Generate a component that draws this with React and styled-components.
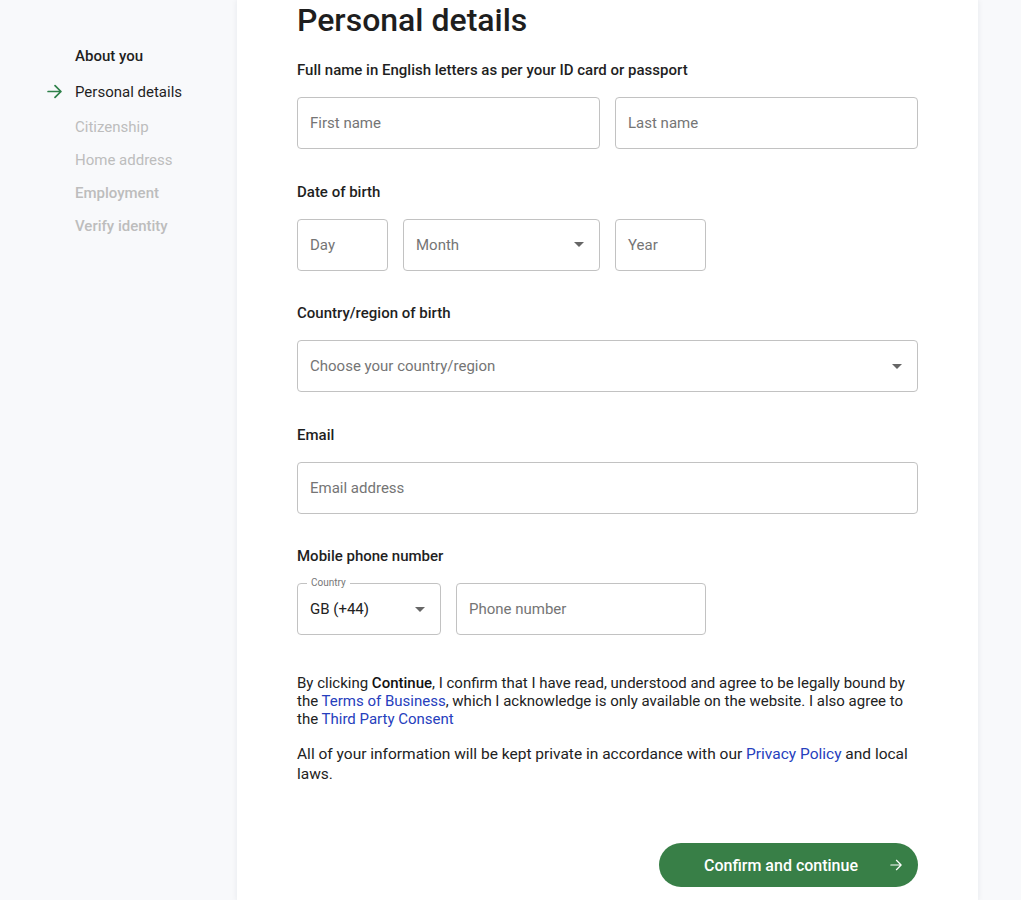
import React from "react";
import styled, { createGlobalStyle } from "styled-components";

const Global = createGlobalStyle`
  html, body { margin: 0; padding: 0; }
  body {
    background: #f8f9fb;
    font-family: Roboto, "Liberation Sans", Arial, sans-serif;
    color: #222;
  }
  * { box-sizing: border-box; }
`;

const Page = styled.div`
  display: flex;
  align-items: stretch;
  min-height: 900px;
`;

const Sidebar = styled.nav`
  width: 237px;
  flex: none;
  padding: 46px 0 0 47px;
  display: flex;
  flex-direction: column;
  gap: 13px;
`;

const NavItem = styled.div`
  display: grid;
  grid-template-columns: 28px auto;
  align-items: center;
  height: ${(p) => (p.$current ? 25 : 20)}px;
  font-size: 15px;
  line-height: 20px;
  font-weight: ${(p) => (p.$bold ? 500 : 400)};
  color: ${(p) => (p.$muted ? "#bdbdbd" : "#1f1f1f")};
`;

const ArrowSlot = styled.span`
  display: flex;
  align-items: center;
  color: #2e8049;
`;

const Card = styled.main`
  width: 741px;
  flex: none;
  background: #fff;
  box-shadow: 0 0 6px rgba(30, 40, 70, 0.08);
  padding: 0 60px 14px;
`;

const Title = styled.h1`
  margin: 0 0 20px;
  font-size: 32px;
  line-height: 40px;
  font-weight: 500;
  color: #1e1e1e;
`;

const Section = styled.section`
  margin-bottom: 32.5px;
`;

const Label = styled.div`
  font-size: 15px;
  line-height: 20px;
  font-weight: 500;
  color: #1f1f1f;
  margin-bottom: 17px;
`;

const Row = styled.div`
  display: flex;
  gap: 15px;
`;

const Field = styled.div`
  position: relative;
  width: ${(p) => p.$w || "100%"};
  height: 52px;
  border: 1px solid #c2c2c2;
  border-radius: 4px;
  display: flex;
  align-items: center;
  padding: 0 12px;
  font-size: 15px;
  color: ${(p) => (p.$filled ? "#222" : "#757575")};
  background: #fff;
`;

const FieldText = styled.span`
  flex: 1;
`;

const Caret = styled.span`
  width: 0;
  height: 0;
  border-left: 5px solid transparent;
  border-right: 5px solid transparent;
  border-top: 5px solid #666;
  margin-right: 3px;
`;

const Legend = styled.span`
  position: absolute;
  top: -7px;
  left: 9px;
  padding: 0 4px;
  background: #fff;
  font-size: 10px;
  line-height: 12px;
  color: #777;
`;

const Text = styled.p`
  margin: ${(p) => p.$mt || 0}px 0 ${(p) => p.$mb || 0}px;
  font-size: ${(p) => p.$fs || 15}px;
  line-height: ${(p) => p.$lh || 18}px;
  color: #222;
`;

const Link = styled.a`
  color: #2640bd;
  text-decoration: none;
`;

const Strong = styled.b`
  font-weight: 500;
  color: #111;
`;

const Actions = styled.div`
  display: flex;
  justify-content: flex-end;
  margin-top: 59px;
`;

const Button = styled.button`
  width: 259px;
  height: 44px;
  border: none;
  border-radius: 22px;
  background: #387f47;
  color: #fff;
  font-family: inherit;
  font-size: 16px;
  font-weight: 500;
  display: flex;
  align-items: center;
  justify-content: space-between;
  padding: 0 16px 0 45px;
`;

const Arrow = ({ size = 14, color = "currentColor", width = 2 }) => (
  <svg width={size} height={size} viewBox="0 0 14 14" fill="none">
    <path
      d="M1 7h12M7.5 1.5 13 7l-5.5 5.5"
      stroke={color}
      strokeWidth={width}
      strokeLinecap="round"
      strokeLinejoin="round"
    />
  </svg>
);

const steps = [
  { label: "About you", bold: true },
  { label: "Personal details", current: true },
  { label: "Citizenship", muted: true },
  { label: "Home address", muted: true },
  { label: "Employment", muted: true, bold: true },
  { label: "Verify identity", muted: true, bold: true },
];

export default function App() {
  return (
    <>
      <Global />
      <Page>
        <Sidebar>
          {steps.map((s) => (
            <NavItem key={s.label} $bold={s.bold} $muted={s.muted} $current={s.current}>
              <ArrowSlot>{s.current && <Arrow size={15} width={1.6} />}</ArrowSlot>
              <span>{s.label}</span>
            </NavItem>
          ))}
        </Sidebar>
        <Card>
          <Title>Personal details</Title>

          <Section>
            <Label>Full name in English letters as per your ID card or passport</Label>
            <Row>
              <Field $w="303px">
                <FieldText>First name</FieldText>
              </Field>
              <Field $w="303px">
                <FieldText>Last name</FieldText>
              </Field>
            </Row>
          </Section>

          <Section>
            <Label>Date of birth</Label>
            <Row>
              <Field $w="91px">
                <FieldText>Day</FieldText>
              </Field>
              <Field $w="197px">
                <FieldText>Month</FieldText>
                <Caret />
              </Field>
              <Field $w="91px">
                <FieldText>Year</FieldText>
              </Field>
            </Row>
          </Section>

          <Section>
            <Label>Country/region of birth</Label>
            <Field>
              <FieldText>Choose your country/region</FieldText>
              <Caret />
            </Field>
          </Section>

          <Section>
            <Label>Email</Label>
            <Field>
              <FieldText>Email address</FieldText>
            </Field>
          </Section>

          <Section>
            <Label>Mobile phone number</Label>
            <Row>
              <Field $w="144px" $filled>
                <Legend>Country</Legend>
                <FieldText>GB (+44)</FieldText>
                <Caret />
              </Field>
              <Field $w="250px">
                <FieldText>Phone number</FieldText>
              </Field>
            </Row>
          </Section>

          <Text $mt={39} $mb={16}>
            By clicking <Strong>Continue</Strong>, I confirm that I have read, understood and
            agree to be legally bound by the <Link href="#">Terms of Business</Link>, which I
            acknowledge is only available on the website. I also agree to the{" "}
            <Link href="#">Third Party Consent</Link>
          </Text>
          <Text $lh={20} $fs={15.5}>
            All of your information will be kept private in accordance with our{" "}
            <Link href="#">Privacy Policy</Link> and local laws.
          </Text>

          <Actions>
            <Button>
              <span>Confirm and continue</span>
              <Arrow size={12} width={1.4} />
            </Button>
          </Actions>
        </Card>
      </Page>
    </>
  );
}
